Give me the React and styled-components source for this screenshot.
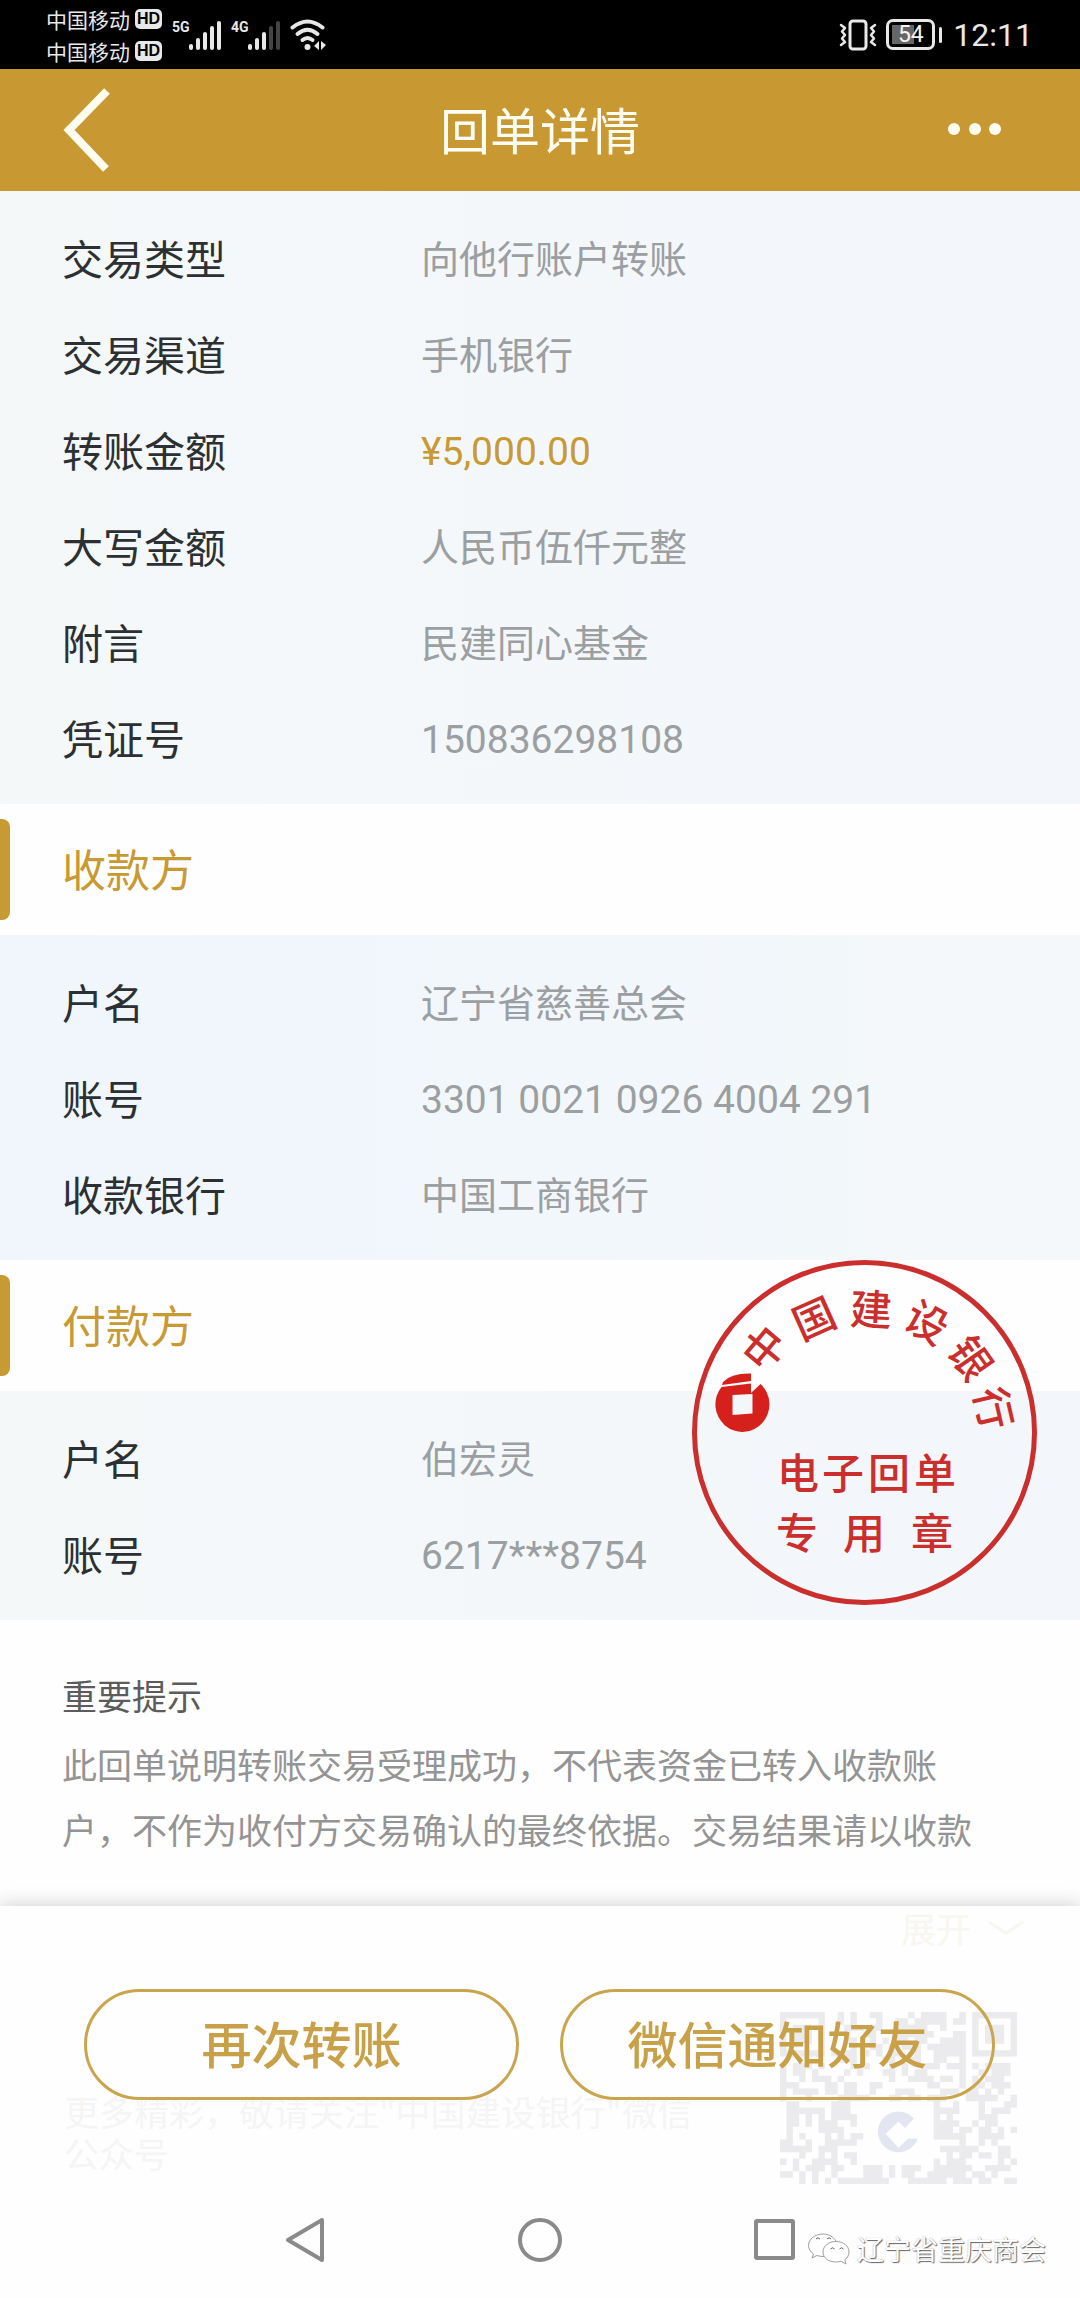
import React from "react";
import styled, { createGlobalStyle } from "styled-components";

const GOLD = "#c79a34";
const STAMP_RED = "#cb2f2d";

const GlobalStyle = createGlobalStyle`
  * {
    box-sizing: border-box;
  }

  body {
    margin: 0;
    background: #fefefe;
    font-family: "Noto Sans CJK SC", "Noto Sans", sans-serif;
  }

  button {
    font-family: inherit;
    cursor: pointer;
  }
`;

const Page = styled.div`
  display: flex;
  flex-direction: column;
  min-height: 100vh;
  background: #fefefe;
`;

// Phone status bar
const StatusBar = styled.div`
  display: flex;
  justify-content: space-between;
  height: 69px;
  padding: 0 47px 0 46px;
  background: #000000;
  color: #e8e8e8;
`;

const StatusGroup = styled.div`
  display: flex;
  align-items: center;
  gap: ${(props) => props.$gap}px;
`;

const Carriers = styled.div`
  display: flex;
  flex-direction: column;
`;

const Carrier = styled.div`
  display: flex;
  align-items: center;
  gap: 5px;
  height: 32px;
  font-size: 21px;
  line-height: 32px;
`;

const HdBadge = styled.span`
  width: 27px;
  height: 20px;
  border-radius: 5px;
  background: #e8e8e8;
  color: #000000;
  font-family: "Liberation Sans", sans-serif;
  font-size: 16px;
  font-weight: bold;
  line-height: 20px;
  text-align: center;
`;

const Signal = styled.div`
  display: flex;
  align-items: flex-start;
  height: 30px;
`;

const SignalLabel = styled.span`
  width: 17px;
  font-family: "Roboto", sans-serif;
  font-size: 14px;
  font-weight: bold;
  line-height: 14px;
`;

const BatteryLevel = styled.div`
  position: relative;
  display: flex;
  align-items: center;
  justify-content: center;
  width: 49px;
  height: 31px;
  margin-right: 9px;
  border: 3px solid #e8e8e8;
  border-radius: 7px;
  background: linear-gradient(#666666, #666666) 3px 3px / 22px 19px no-repeat;
  color: #f4f4f4;
  font-family: "Roboto", sans-serif;
  font-size: 23px;
  line-height: 28px;

  &::after {
    content: "";
    position: absolute;
    top: 5px;
    right: -10px;
    width: 3px;
    height: 16px;
    border-radius: 2px;
    background: #e8e8e8;
  }
`;

const Clock = styled.span`
  font-family: "Roboto", sans-serif;
  font-size: 32px;
  line-height: 36px;
`;

// Title bar
const Header = styled.header`
  display: grid;
  grid-template-columns: 60px 1fr 60px;
  align-items: center;
  height: 122px;
  padding: 0 75px 0 57px;
  background: #c89933;
`;

const IconButton = styled.button`
  display: flex;
  justify-content: center;
  padding: 0;
  border: none;
  background: none;
  color: ${(props) => props.$color || "#fffdf0"};
`;

const HeaderTitle = styled.h1`
  margin: 0;
  padding: 0 0 4px 18px;
  color: #fffef4;
  font-size: 50px;
  font-weight: 400;
  line-height: 60px;
  text-align: center;
`;

// Receipt body
const Section = styled.section`
  position: relative;
`;

const SectionHeader = styled.div`
  display: flex;
  align-items: center;
  height: 131px;
`;

const SectionMark = styled.span`
  width: 10px;
  height: 101px;
  margin-right: 52px;
  border-radius: 0 8px 8px 0;
  background: ${GOLD};
`;

const SectionTitle = styled.h2`
  margin: 0;
  padding-bottom: 4px;
  color: ${GOLD};
  font-size: 44px;
  font-weight: 400;
  line-height: 60px;
`;

const Details = styled.dl`
  margin: 0;
  padding: 18px 62px 19px;
  background: ${(props) => props.$background};
`;

const DetailRow = styled.div`
  display: flex;
  align-items: center;
  min-height: 96px;
`;

const DetailLabel = styled.dt`
  flex: 0 0 359px;
  color: #2c3033;
  font-size: 41px;
  line-height: 60px;
`;

const DetailValue = styled.dd`
  flex: 1;
  margin: 0;
  padding-top: 6px;
  color: ${(props) => (props.$accent ? GOLD : "#9b9fa2")};
  font-family: "Roboto", "Noto Sans CJK SC", sans-serif;
  font-size: ${(props) => (props.$numeric ? 39 : 38)}px;
  line-height: 60px;
`;

const StampSvg = styled.svg`
  position: absolute;
  top: 0;
  right: 43px;
  width: 345px;
  height: 345px;
`;

const Tips = styled.section`
  flex: 1;
  padding: 42px 62px 40px;
`;

const TipsTitle = styled.h3`
  margin: 0 0 4px;
  color: #5c5c5c;
  font-size: 35px;
  font-weight: 400;
  line-height: 65px;
`;

const TipsText = styled.p`
  margin: 0;
  color: #949494;
  font-size: 35px;
  line-height: 65px;
`;

// Bottom bar lies over the rest of the receipt, which stays faintly visible
const Footer = styled.footer`
  position: relative;
  padding-top: 83px;
  background: #fefefe;
  box-shadow: 0 -3px 16px rgba(60, 60, 70, 0.2);
`;

const Underlay = styled.div`
  position: absolute;
  inset: 0;
`;

const FadedMore = styled.div`
  position: absolute;
  top: 0;
  right: 55px;
  display: flex;
  align-items: center;
  gap: 16px;
  color: #f7f6f0;
  font-size: 35px;
  line-height: 44px;
`;

const FadedText = styled.p`
  position: absolute;
  top: 184px;
  left: 64px;
  width: 650px;
  margin: 0;
  color: #f5f5f5;
  font-size: 35px;
  line-height: 42px;
`;

const QrSvg = styled.svg`
  position: absolute;
  top: 106px;
  right: 63px;
  width: 237px;
  height: 172px;
`;

const Actions = styled.div`
  position: relative;
  display: flex;
  gap: 41px;
  padding: 0 85px 0 84px;
`;

const ActionButton = styled.button`
  flex: 1;
  height: 111px;
  padding: 0 0 6px;
  border: 3px solid #c9a64e;
  border-radius: 56px;
  background: transparent;
  color: #c8a048;
  font-size: 50px;
  font-weight: 500;
  line-height: 60px;
`;

const NavBar = styled.nav`
  position: relative;
  display: flex;
  justify-content: center;
  gap: 189px;
  padding: 116px 0 34px;
`;

const Watermark = styled.div`
  position: absolute;
  right: 34px;
  bottom: 29px;
  display: flex;
  align-items: center;
  gap: 6px;
  color: #ffffff;
  font-size: 27px;
  line-height: 40px;
  text-shadow: 1px 1px 1px #666666, 0 0 1px #999999;
`;

const summary = [
  { label: "交易类型", value: "向他行账户转账" },
  { label: "交易渠道", value: "手机银行" },
  { label: "转账金额", value: "¥5,000.00", numeric: true, accent: true },
  { label: "大写金额", value: "人民币伍仟元整" },
  { label: "附言", value: "民建同心基金" },
  { label: "凭证号", value: "150836298108", numeric: true },
];

const payee = [
  { label: "户名", value: "辽宁省慈善总会" },
  { label: "账号", value: "3301 0021 0926 4004 291", numeric: true },
  { label: "收款银行", value: "中国工商银行" },
];

const payer = [
  { label: "户名", value: "伯宏灵" },
  { label: "账号", value: "6217***8754", numeric: true },
];

const stampGlyphs = [
  { char: "中", x: 72, y: 88, angle: -50 },
  { char: "国", x: 122, y: 58, angle: -24 },
  { char: "建", x: 179, y: 49, angle: 3 },
  { char: "设", x: 235, y: 62, angle: 29 },
  { char: "银", x: 279, y: 98, angle: 55 },
  { char: "行", x: 302, y: 148, angle: 77 },
  { char: "电", x: 106, y: 213, angle: 0 },
  { char: "子", x: 151, y: 213, angle: 0 },
  { char: "回", x: 197, y: 213, angle: 0 },
  { char: "单", x: 243, y: 213, angle: 0 },
  { char: "专", x: 105, y: 273, angle: 0 },
  { char: "用", x: 172, y: 273, angle: 0 },
  { char: "章", x: 240, y: 273, angle: 0 },
];

const QR_SIZE = 37;
const QR_ROWS = 27;

const inFinder = (col, row) => row < 8 && (col < 8 || col >= QR_SIZE - 8);
const inLogo = (col, row) => col > 12 && col < 24 && row > 13 && row < 24;

const buildQrPath = () => {
  let seed = 20210;
  let path = "";
  for (let row = 0; row < QR_ROWS; row++) {
    for (let col = 0; col < QR_SIZE; col++) {
      seed = (seed * 16807) % 2147483647;
      if (inFinder(col, row) || inLogo(col, row)) continue;
      if (seed / 2147483647 < 0.52) path += `M${col} ${row}h1v1h-1z`;
    }
  }
  return path;
};

const qrPath = buildQrPath();

const SignalBars = ({ level }) => (
  <svg width="32" height="30" viewBox="0 0 32 30" aria-hidden="true">
    {[6, 12, 18, 24, 29].map((height, index) => (
      <rect
        key={height}
        x={index * 7}
        y={30 - height}
        width="4"
        height={height}
        rx="2"
        fill={index < level ? "#e8e8e8" : "#444444"}
      />
    ))}
  </svg>
);

const WifiIcon = () => (
  <svg width="38" height="32" viewBox="0 0 38 32" fill="none" stroke="#e8e8e8" strokeLinecap="round" aria-hidden="true">
    <path d="M2.500 8.500Q17.500 -3.500 32.500 8.500" strokeWidth="4" />
    <path d="M7.500 15Q17.500 6.500 27.500 15" strokeWidth="4" />
    <path d="M12.500 21Q17.500 17 22.500 21" strokeWidth="4" />
    <circle cx="17.500" cy="28" r="3" fill="#e8e8e8" stroke="none" />
    <path d="M29 22v9l-5-4zM31 22v9l5-5z" fill="#e8e8e8" stroke="none" />
  </svg>
);

const VibrateIcon = () => (
  <svg width="38" height="32" viewBox="0 0 38 32" fill="none" stroke="#e8e8e8" strokeLinejoin="round" strokeLinecap="round" aria-hidden="true">
    <rect x="11" y="2" width="16" height="28" rx="3" strokeWidth="3" />
    <path d="M2 6l4 3-3 3.500 3 3.500-3 3.500 3 3.500-4 3" strokeWidth="2.500" />
    <path d="M36 6l-4 3 3 3.500-3 3.500 3 3.500-3 3.500 4 3" strokeWidth="2.500" />
  </svg>
);

const DetailList = ({ items, background }) => (
  <Details $background={background}>
    {items.map((item) => (
      <DetailRow key={item.label}>
        <DetailLabel>{item.label}</DetailLabel>
        <DetailValue $numeric={item.numeric} $accent={item.accent}>
          {item.value}
        </DetailValue>
      </DetailRow>
    ))}
  </Details>
);

const SectionHeading = ({ children }) => (
  <SectionHeader>
    <SectionMark />
    <SectionTitle>{children}</SectionTitle>
  </SectionHeader>
);

const Stamp = () => (
  <StampSvg viewBox="0 0 345 345">
    <circle cx="172.500" cy="172.500" r="170" fill="none" stroke={STAMP_RED} strokeWidth="5" />
    <g fill="#d5201c">
      <path d="M31 122Q39 113 59 113.500V121L30 125Z" />
      <path
        fillRule="evenodd"
        d="M29.500 127L59 123.500V133L68.500 124A27 27.500 0 1 1 29.500 127ZM40.500 135V155L60.500 153.500V134Z"
      />
    </g>
    <g fill={STAMP_RED} fontSize="42" fontWeight="500" textAnchor="middle">
      {stampGlyphs.map(({ char, x, y, angle }) => (
        <text key={char} transform={`translate(${x} ${y}) rotate(${angle})`} y="16">
          {char}
        </text>
      ))}
    </g>
  </StampSvg>
);

const QrCode = () => (
  <QrSvg viewBox="0 0 37 27" preserveAspectRatio="none" aria-hidden="true">
    <path d={qrPath} fill="#ebeaec" />
    <g fill="none" stroke="#ebeaec">
      <rect x="0.500" y="0.500" width="6" height="6" />
      <rect x="30.500" y="0.500" width="6" height="6" />
    </g>
    <path d="M2 2h3v3h-3zM32 2h3v3h-3z" fill="#ebeaec" />
    <path
      d="M20.900 16.700A3.200 3.200 0 1 0 21.500 19.900H20L18.500 21.300L16.500 19.100L18.500 17.200L19.500 18.200Z"
      fill="#e3e6f0"
    />
  </QrSvg>
);

const WechatIcon = () => (
  <svg width="44" height="34" viewBox="0 0 44 34" fill="#ffffff" stroke="#a0a0a0" strokeWidth="1" strokeLinejoin="round" aria-hidden="true">
    <path d="M16 2C8 2 1.500 7 1.500 13.500C1.500 17 3.500 20 6.500 22L5 26L10 23.500C12 24.200 14 24.500 16 24.500C24 24.500 30 19.500 30 13.500S24 2 16 2Z" />
    <path d="M29 9.500C21.500 9.500 16 14 16 20S21.500 30 29 30C31 30 32.500 29.700 34 29.200L39 32L37.800 27.800C40.500 26 42 23 42 20C42 14 36.500 9.500 29 9.500Z" />
    <path d="M9 7q2-2.500 4 0M20 7q2-2.500 4 0M23.500 17q2-2.500 4 0M32.500 17q2-2.500 4 0" fill="none" stroke="#666666" />
  </svg>
);

const App = () => {
  return (
    <>
      <GlobalStyle />
      <Page>
        <StatusBar>
          <StatusGroup $gap={10}>
            <Carriers>
              <Carrier>
                中国移动<HdBadge>HD</HdBadge>
              </Carrier>
              <Carrier>
                中国移动<HdBadge>HD</HdBadge>
              </Carrier>
            </Carriers>
            <Signal>
              <SignalLabel>5G</SignalLabel>
              <SignalBars level={5} />
            </Signal>
            <Signal>
              <SignalLabel>4G</SignalLabel>
              <SignalBars level={3} />
            </Signal>
            <WifiIcon />
          </StatusGroup>
          <StatusGroup $gap={9}>
            <VibrateIcon />
            <BatteryLevel>54</BatteryLevel>
            <Clock>12:11</Clock>
          </StatusGroup>
        </StatusBar>

        <Header>
          <IconButton aria-label="返回">
            <svg width="60" height="90" viewBox="0 0 60 90" fill="none" stroke="currentColor" strokeWidth="8">
              <path d="M50 6L12 45L49 84" />
            </svg>
          </IconButton>
          <HeaderTitle>回单详情</HeaderTitle>
          <IconButton aria-label="更多">
            <svg width="60" height="14" viewBox="0 0 60 14" fill="currentColor">
              <circle cx="9" cy="6" r="6" />
              <circle cx="30" cy="6" r="6" />
              <circle cx="50" cy="6" r="6" />
            </svg>
          </IconButton>
        </Header>

        <DetailList items={summary} background="linear-gradient(90deg, #f4f8f9, #f3f7fc)" />

        <Section>
          <SectionHeading>收款方</SectionHeading>
          <DetailList items={payee} background="linear-gradient(90deg, #f1f6fd, #f4f8fa)" />
        </Section>

        <Section>
          <SectionHeading>付款方</SectionHeading>
          <DetailList items={payer} background="linear-gradient(90deg, #f4f8f9, #f3f7fb)" />
          <Stamp />
        </Section>

        <Tips>
          <TipsTitle>重要提示</TipsTitle>
          <TipsText>
            此回单说明转账交易受理成功，不代表资金已转入收款账
            <br />
            户，不作为收付方交易确认的最终依据。交易结果请以收款
          </TipsText>
        </Tips>

        <Footer>
          <Underlay aria-hidden="true">
            <FadedMore>
              展开
              <svg width="38" height="16" viewBox="0 0 38 16" fill="none" stroke="currentColor" strokeWidth="3">
                <path d="M2 2L19 13L36 2" />
              </svg>
            </FadedMore>
            <FadedText>更多精彩，敬请关注"中国建设银行"微信公众号</FadedText>
            <QrCode />
          </Underlay>
          <Actions>
            <ActionButton>再次转账</ActionButton>
            <ActionButton>微信通知好友</ActionButton>
          </Actions>
          <NavBar>
            <IconButton $color="#8a8a8a" aria-label="后退">
              <svg width="44" height="48" viewBox="0 0 44 48" fill="none" stroke="currentColor" strokeWidth="4" strokeLinejoin="round">
                <path d="M39 4V44L5 24Z" />
              </svg>
            </IconButton>
            <IconButton $color="#8a8a8a" aria-label="主页">
              <svg width="48" height="48" viewBox="0 0 48 48" fill="none" stroke="currentColor" strokeWidth="4">
                <circle cx="24" cy="24" r="20" />
              </svg>
            </IconButton>
            <IconButton $color="#8a8a8a" aria-label="最近任务">
              <svg width="44" height="48" viewBox="0 0 44 48" fill="none" stroke="currentColor" strokeWidth="4" strokeLinejoin="round">
                <rect x="3" y="5" width="37" height="37" rx="1" />
              </svg>
            </IconButton>
          </NavBar>
          <Watermark>
            <WechatIcon />
            辽宁省重庆商会
          </Watermark>
        </Footer>
      </Page>
    </>
  );
};

export default App;
